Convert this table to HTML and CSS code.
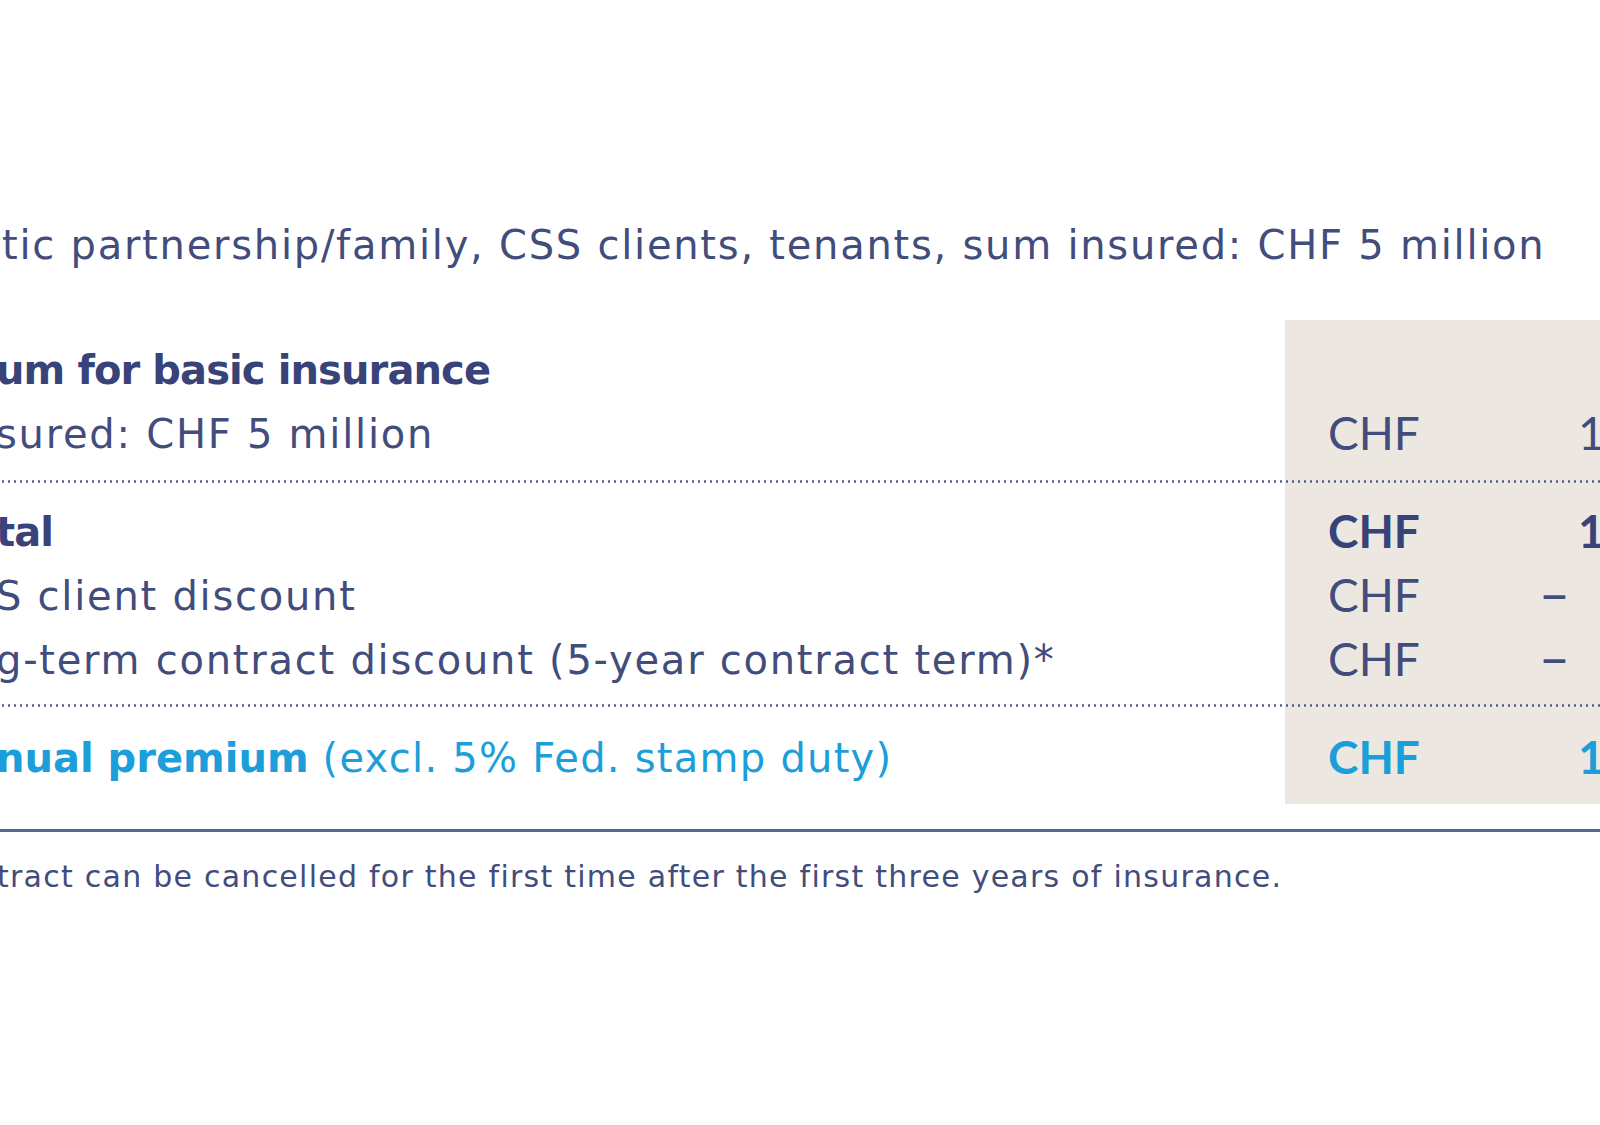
FILE: index.html
```html
<!DOCTYPE html>
<html lang="en">
<head>
<meta charset="utf-8">
<title>Premium example</title>
<link rel="stylesheet" href="styles.css">
</head>
<body>
<main class="page">
  <p class="intro">tic partnership/family, CSS clients, tenants, sum insured: CHF 5 million</p>

  <section class="table">
    <div class="group group-first">
      <div class="row">
        <div class="label bold">um for basic insurance</div>
        <div class="amount"></div>
      </div>
      <div class="row">
        <div class="label">sured: CHF 5 million</div>
        <div class="amount"><span class="cur">CHF</span><span class="sign"></span><span class="val">1</span></div>
      </div>
    </div>

    <div class="group group-mid">
      <div class="row">
        <div class="label bold">tal</div>
        <div class="amount bold"><span class="cur">CHF</span><span class="sign"></span><span class="val">1</span></div>
      </div>
      <div class="row">
        <div class="label">S client discount</div>
        <div class="amount"><span class="cur">CHF</span><span class="sign">–</span><span class="val"></span></div>
      </div>
      <div class="row">
        <div class="label">g-term contract discount (5-year contract term)*</div>
        <div class="amount"><span class="cur">CHF</span><span class="sign">–</span><span class="val"></span></div>
      </div>
    </div>

    <div class="group group-last">
      <div class="row total">
        <div class="label"><strong>nual premium</strong> (excl. 5% Fed. stamp duty)</div>
        <div class="amount bold"><span class="cur">CHF</span><span class="sign"></span><span class="val">1</span></div>
      </div>
    </div>
  </section>

  <p class="footnote">tract can be cancelled for the first time after the first three years of insurance.</p>
</main>
</body>
</html>
```

FILE: styles.css
```css
html, body {
  margin: 0;
  padding: 0;
  background: #ffffff;
  overflow: hidden;
}

body {
  width: 1600px;
  height: 1125px;
  font-family: "DejaVu Sans", Lato, sans-serif;
  color: #434d7c;
}

.page {
  padding-top: 218px;
}

.intro {
  margin: 0;
  font-size: 40px;
  line-height: 54px;
  letter-spacing: 1.75px;
  white-space: nowrap;
  padding-left: 2px;
}

.table {
  margin-top: 48px;
  width: 1600px;
  background: linear-gradient(to right, transparent 1285px, #ece8e1 1285px);
}

.group {
  position: relative;
}

.group-first {
  padding: 18px 0 16px;
}

.group-mid {
  padding: 18px 0 14px;
}

.group-last {
  padding: 20px 0 14px;
}

.group-first::after,
.group-mid::after {
  content: "";
  position: absolute;
  left: 0;
  right: 0;
  bottom: -1px;
  height: 3px;
  background-image: radial-gradient(circle, #4d5890 1px, transparent 1.4px);
  background-size: 6px 3px;
  background-repeat: repeat-x;
}

.row {
  display: grid;
  grid-template-columns: 1285px 1fr;
  height: 64px;
  align-items: center;
  font-size: 40px;
}

.label {
  white-space: nowrap;
  margin-left: -4px;
  letter-spacing: 1.75px;
}

.label.bold {
  letter-spacing: -0.9px;
}

.label strong {
  letter-spacing: 0;
}

.total .label {
  letter-spacing: 1.25px;
}

.bold {
  font-weight: 700;
  color: #384379;
}

.amount {
  display: grid;
  grid-template-columns: 215px 35px auto;
  align-items: baseline;
  padding-left: 43px;
  white-space: nowrap;
  font-family: Lato, "DejaVu Sans", sans-serif;
  font-size: 46px;
  line-height: 56px;
  margin-top: -3px;
}

.sign {
  font-family: "DejaVu Sans", sans-serif;
  font-size: 54px;
  margin-left: -2px;
}

.total {
  color: #1b9ed9;
}

.total strong {
  font-weight: 700;
}

.total .amount {
  color: #1b9ed9;
}

.footnote {
  margin: 25px 0 0;
  padding-top: 25px;
  border-top: 3px solid #5b6592;
  font-size: 30px;
  line-height: 40px;
  letter-spacing: 1.25px;
  white-space: nowrap;
  margin-left: -3px;
}
```
